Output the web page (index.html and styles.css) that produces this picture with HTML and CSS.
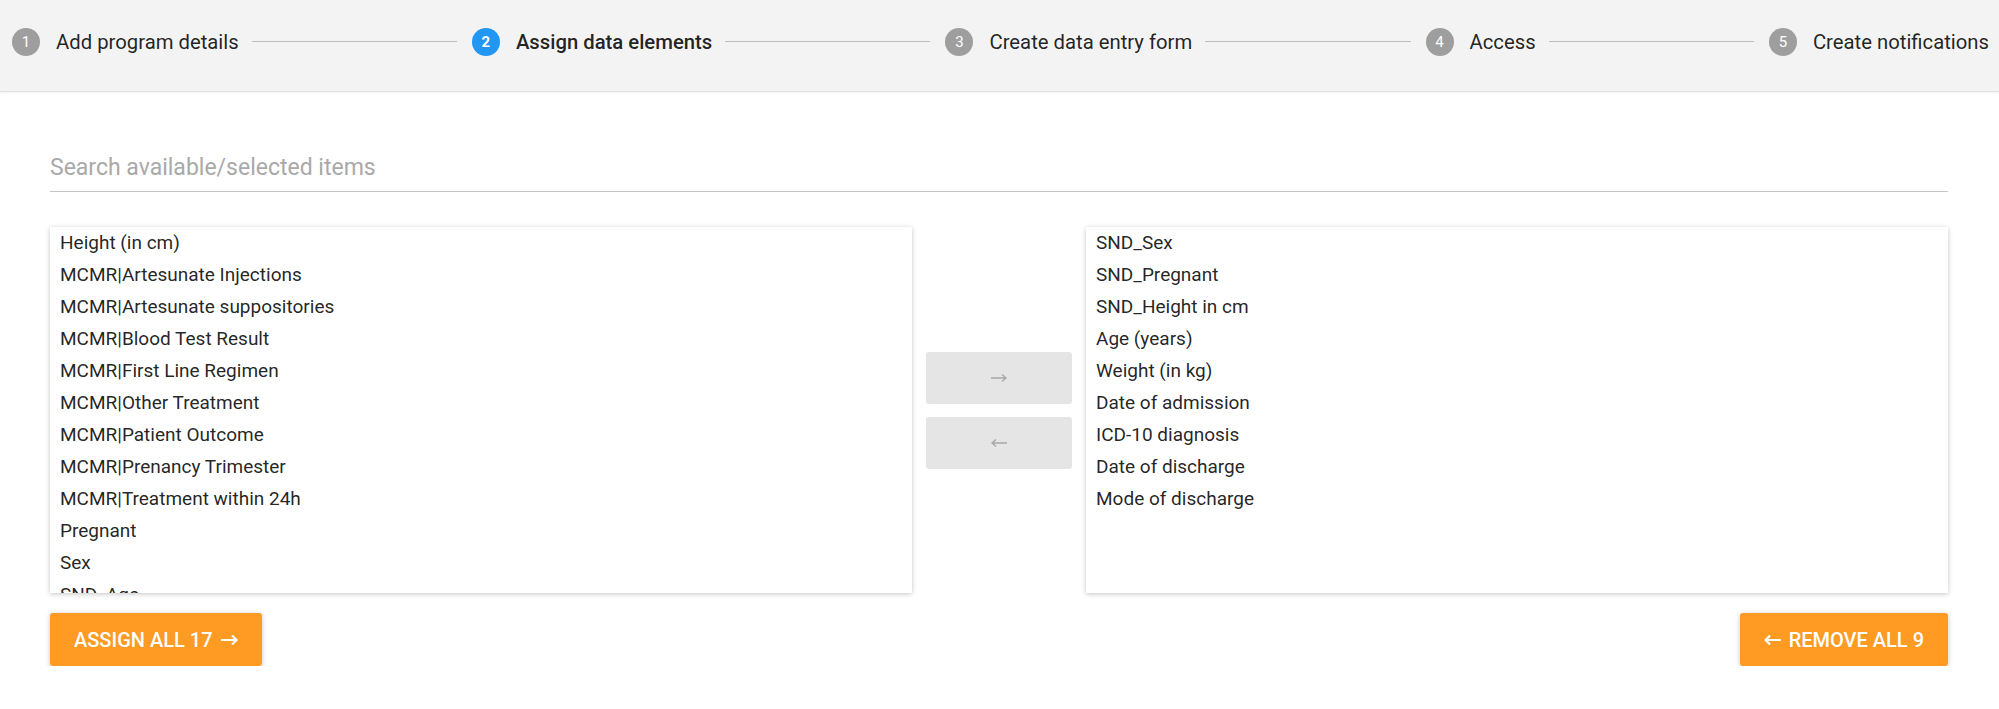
FILE: index.html
```html
<!DOCTYPE html>
<html lang="en">
<head>
<meta charset="utf-8">
<title>Assign data elements</title>
<link rel="stylesheet" href="styles.css">
</head>
<body>
<header class="stepper">
  <div class="step"><span class="step-num">1</span><span class="step-label">Add program details</span></div>
  <div class="connector"></div>
  <div class="step active"><span class="step-num">2</span><span class="step-label">Assign data elements</span></div>
  <div class="connector"></div>
  <div class="step"><span class="step-num">3</span><span class="step-label">Create data entry form</span></div>
  <div class="connector"></div>
  <div class="step"><span class="step-num">4</span><span class="step-label">Access</span></div>
  <div class="connector"></div>
  <div class="step"><span class="step-num">5</span><span class="step-label">Create notifications</span></div>
</header>

<main class="content">
  <div class="search">
    <input class="search-input" type="text" placeholder="Search available/selected items">
  </div>

  <div class="transfer">
    <ul class="list">
      <li>Height (in cm)</li>
      <li>MCMR|Artesunate Injections</li>
      <li>MCMR|Artesunate suppositories</li>
      <li>MCMR|Blood Test Result</li>
      <li>MCMR|First Line Regimen</li>
      <li>MCMR|Other Treatment</li>
      <li>MCMR|Patient Outcome</li>
      <li>MCMR|Prenancy Trimester</li>
      <li>MCMR|Treatment within 24h</li>
      <li>Pregnant</li>
      <li>Sex</li>
      <li>SND_Age</li>
      <li>SND_Weight in kg</li>
      <li>Weight</li>
      <li>Mode of admission</li>
      <li>Length of stay</li>
      <li>Outcome</li>
    </ul>

    <div class="moves">
      <button class="move" type="button" aria-label="Assign">
        <svg class="move-arrow" viewBox="0 0 16 10" width="16" height="10"><path d="M0 5H15M11 1.5L15 5L11 8.5" fill="none" stroke="currentColor" stroke-width="1.5"/></svg>
      </button>
      <button class="move" type="button" aria-label="Remove">
        <svg class="move-arrow" viewBox="0 0 16 10" width="16" height="10"><path d="M16 5H1M5 1.5L1 5L5 8.5" fill="none" stroke="currentColor" stroke-width="1.5"/></svg>
      </button>
    </div>

    <ul class="list">
      <li>SND_Sex</li>
      <li>SND_Pregnant</li>
      <li>SND_Height in cm</li>
      <li>Age (years)</li>
      <li>Weight (in kg)</li>
      <li>Date of admission</li>
      <li>ICD-10 diagnosis</li>
      <li>Date of discharge</li>
      <li>Mode of discharge</li>
    </ul>
  </div>

  <div class="actions">
    <button class="bulk" type="button"><span>Assign all 17</span>
      <svg class="bulk-arrow" viewBox="0 0 17 12" width="17" height="12"><path d="M0 6H15.5M11 1.5L15.5 6L11 10.5" fill="none" stroke="currentColor" stroke-width="2.2"/></svg>
    </button>
    <button class="bulk" type="button">
      <svg class="bulk-arrow" viewBox="0 0 17 12" width="17" height="12"><path d="M17 6H1.5M6 1.5L1.5 6L6 10.5" fill="none" stroke="currentColor" stroke-width="2.2"/></svg>
      <span>Remove all 9</span></button>
  </div>
</main>
</body>
</html>
```

FILE: styles.css
```css
* {
  box-sizing: border-box;
}

html, body {
  margin: 0;
  padding: 0;
  background: #ffffff;
  font-family: Roboto, "Liberation Sans", Arial, sans-serif;
  color: rgba(0, 0, 0, 0.87);
}

.stepper {
  display: flex;
  align-items: center;
  height: 92px;
  padding: 0 10px 8px 12px;
  background: #f3f3f3;
  border-bottom: 1px solid #e2e2e2;
  box-shadow: 0 1px 2px rgba(0, 0, 0, 0.06);
}

.step {
  display: flex;
  align-items: center;
  flex: none;
}

.step-num {
  width: 28px;
  height: 28px;
  border-radius: 50%;
  background: #9e9e9e;
  color: #ffffff;
  font-size: 15px;
  display: flex;
  align-items: center;
  justify-content: center;
  margin-right: 16px;
}

.step-label {
  font-size: 20.3px;
  color: rgba(0, 0, 0, 0.87);
  white-space: nowrap;
}

.step.active .step-num {
  background: #2196f3;
  font-weight: 700;
}

.step.active .step-label {
  font-weight: 500;
}

.connector {
  flex: 1;
  height: 1px;
  background: #bdbdbd;
  margin: 0 15px 0 13px;
}

.content {
  padding: 0 51px 0 50px;
}

.search {
  padding-top: 51px;
}

.search-input {
  display: block;
  width: 100%;
  height: 49px;
  border: none;
  border-bottom: 1px solid #c4c4c4;
  background: transparent;
  font-family: Roboto, "Liberation Sans", Arial, sans-serif;
  font-size: 23px;
  padding: 0;
  outline: none;
  color: rgba(0, 0, 0, 0.87);
}

.search-input::placeholder {
  color: #a9a9a9;
}

.transfer {
  display: flex;
  align-items: center;
  gap: 14px;
  margin-top: 35px;
}

.list {
  flex: 1;
  height: 366px;
  margin: 0;
  padding: 0 10px;
  list-style: none;
  overflow: hidden;
  background: #ffffff;
  box-shadow: 0 1px 6px rgba(0, 0, 0, 0.12), 0 1px 4px rgba(0, 0, 0, 0.12);
}

.list li {
  font-size: 19px;
  line-height: 32px;
  white-space: nowrap;
}

.moves {
  display: flex;
  flex-direction: column;
  gap: 13px;
  width: 146px;
  flex: none;
}

.move {
  height: 52px;
  border: none;
  border-radius: 3px;
  background: #e5e5e5;
  color: #a8a8a8;
  padding: 0;
  display: flex;
  align-items: center;
  justify-content: center;
}

.move-arrow {
  display: block;
}

.actions {
  display: flex;
  justify-content: space-between;
  margin-top: 20px;
}

.bulk {
  display: flex;
  align-items: center;
  gap: 8px;
  height: 53px;
  padding: 0 24px;
  border: none;
  border-radius: 3px;
  background: #ff9a22;
  color: #ffffff;
  font-family: Roboto, "Liberation Sans", Arial, sans-serif;
  font-size: 20px;
  font-weight: 500;
  text-transform: uppercase;
  box-shadow: 0 1px 6px rgba(0, 0, 0, 0.12), 0 1px 4px rgba(0, 0, 0, 0.12);
}

.bulk-arrow {
  display: block;
  flex: none;
}
```
